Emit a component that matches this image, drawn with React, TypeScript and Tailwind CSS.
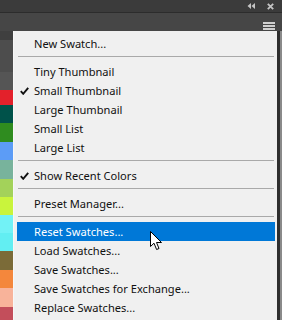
import React from "react";

type Entry =
  | { kind: "item"; label: string; checked?: boolean; active?: boolean }
  | { kind: "sep" };

const entries: Entry[] = [
  { kind: "item", label: "New Swatch..." },
  { kind: "sep" },
  { kind: "item", label: "Tiny Thumbnail" },
  { kind: "item", label: "Small Thumbnail", checked: true },
  { kind: "item", label: "Large Thumbnail" },
  { kind: "item", label: "Small List" },
  { kind: "item", label: "Large List" },
  { kind: "sep" },
  { kind: "item", label: "Show Recent Colors", checked: true },
  { kind: "sep" },
  { kind: "item", label: "Preset Manager..." },
  { kind: "sep" },
  { kind: "item", label: "Reset Swatches...", active: true },
  { kind: "item", label: "Load Swatches..." },
  { kind: "item", label: "Save Swatches..." },
  { kind: "item", label: "Save Swatches for Exchange..." },
  { kind: "item", label: "Replace Swatches..." },
];

const swatches = [
  { c: "bg-[#4d4d4d]", h: "h-[32px]" },
  { c: "bg-[#555555]", h: "h-[18px]" },
  { c: "bg-[#e3212b]", h: "h-[15px]" },
  { c: "bg-[#00524a]", h: "h-[18px]" },
  { c: "bg-[#2f8c1f]", h: "h-[19px]" },
  { c: "bg-[#5c9cf6]", h: "h-[18px]" },
  { c: "bg-[#78b39c]", h: "h-[19px]" },
  { c: "bg-[#a3d25a]", h: "h-[18px]" },
  { c: "bg-[#c9f43c]", h: "h-[18px]" },
  { c: "bg-[#72f2f6]", h: "h-[18px]" },
  { c: "bg-[#62eef2]", h: "h-[18px]" },
  { c: "bg-[#7b6b38]", h: "h-[19px]" },
  { c: "bg-[#f4873c]", h: "h-[18px]" },
  { c: "bg-[#f8b39a]", h: "h-[19px]" },
  { c: "bg-[#c34e5b]", h: "h-[19px]" },
];

function Check() {
  return (
    <svg width="9" height="8" viewBox="0 0 9 8" className="block">
      <path d="M0.8 4.2 L3.2 6.8 L8.2 0.8" fill="none" stroke="#111" strokeWidth="1.9" />
    </svg>
  );
}

function Cursor() {
  return (
    <svg width="13" height="20" viewBox="0 0 13 20" className="absolute left-[150px] top-[231px]">
      <path
        d="M0.5 0.5 L0.5 15.5 L4 12.2 L6.6 18.5 L9 17.5 L6.5 11.5 L11.5 11.5 Z"
        fill="#fff"
        stroke="#000"
        strokeWidth="1"
        strokeLinejoin="round"
      />
    </svg>
  );
}

export default function App() {
  return (
    <div
      className="relative w-[282px] h-[320px] overflow-hidden bg-[#464646]"
      style={{ fontFamily: '"Noto Sans", "Open Sans", sans-serif' }}
    >
      <div className="h-[12px] bg-[#3b3b3b] flex items-center justify-end gap-[12px] pr-[8px]">
        <svg width="8" height="6" viewBox="0 0 8 6">
          <path d="M4 0 L0.5 3 L4 6 Z M8 0 L4.5 3 L8 6 Z" fill="#c4c4c4" />
        </svg>
        <svg width="7" height="7" viewBox="0 0 7 7">
          <path d="M0.8 0.8 L6.2 6.2 M6.2 0.8 L0.8 6.2" stroke="#c4c4c4" strokeWidth="1.8" />
        </svg>
      </div>
      <div className="h-[1px] bg-[#2c2c2c]" />
      <div className="h-[18px] flex items-start justify-end pr-[7px] pt-[9px]">
        <div className="flex flex-col gap-[1.5px] w-[12px]">
          <div className="h-[1.5px] bg-[#cfcfcf]" />
          <div className="h-[1.5px] bg-[#cfcfcf]" />
          <div className="h-[1.5px] bg-[#cfcfcf]" />
        </div>
      </div>
      <div className="flex">
        <div className="w-[13px] flex flex-col pt-[9px] bg-[#3f3f3f]">
          {swatches.map((s, i) => (
            <div key={i} className={`${s.c} ${s.h} shrink-0`} />
          ))}
        </div>
        <div className="w-[264px] bg-[#f0f0f0] pt-[3px] pl-[3px] pr-[2px] border-l border-[#f7f7f7] text-[11.1px] text-[#111]">
          {entries.map((e, i) =>
            e.kind === "sep" ? (
              <div key={i} className="h-[9px] pt-[3px] pl-[1px] pr-[1px]">
                <div className="h-[1px] bg-[#a9a9a9]" />
              </div>
            ) : (
              <div
                key={i}
                className={`h-[19px] flex items-center ${e.active ? "bg-[#0078d7] text-white" : ""}`}
              >
                <div className="w-[17px] flex justify-end pr-[5px]">{e.checked && <Check />}</div>
                <span className="leading-none">{e.label}</span>
              </div>
            )
          )}
        </div>
        <div className="w-[3px] h-[300px] bg-[#2e2e2e]" />
        <div className="w-[2px] h-[300px] bg-[#8a8a8a]" />
      </div>
      <Cursor />
    </div>
  );
}
